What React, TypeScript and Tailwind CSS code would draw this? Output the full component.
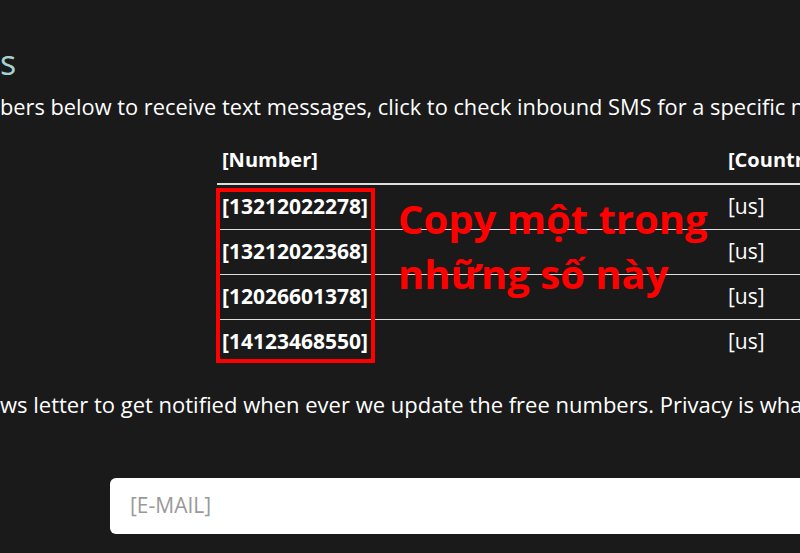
import React from "react";

const rows = ["13212022278", "13212022368", "12026601378", "14123468550"];

export default function App() {
  return (
    <div className="relative w-[800px] h-[553px] overflow-hidden bg-[#1a1a1a] text-white font-['Open_Sans',sans-serif]">
      <div className="mt-[40px] h-[44px] text-[34px] leading-[44px] text-[#a6d3d1] whitespace-nowrap">s</div>
      <p className="mt-[9px] text-[21.8px] leading-[28px] whitespace-nowrap overflow-hidden">
        bers below to receive text messages, click to check inbound SMS for a specific n
      </p>
      <div className="relative mt-[16px] ml-[217px] w-[583px]">
        <div className="flex h-[48px] items-center border-b-2 border-[#dddddd] text-[20px] font-bold">
          <div className="w-[511px] shrink-0 pl-[5px]">[Number]</div>
          <div className="whitespace-nowrap">[Countr</div>
        </div>
        {rows.map((n, i) => (
          <div
            key={n}
            className={
              i < 3
                ? "flex h-[45px] items-center border-b border-[#dddddd]"
                : "flex h-[44px] items-center"
            }
          >
            <div className="w-[511px] shrink-0 pl-[5px] text-[21px] font-bold">[{n}]</div>
            <div className="text-[21px]">[us]</div>
          </div>
        ))}
        <div className="absolute left-[-1px] top-[51px] w-[159px] h-[175px] border-[4px] border-[#ff0000]" />
        <div className="absolute left-[181px] top-[54px] text-[40px] leading-[55px] font-bold text-[#ff0000] whitespace-nowrap">
          Copy một trong
          <br />
          những số này
        </div>
      </div>
      <p className="mt-[26px] text-[22px] leading-[28px] whitespace-nowrap overflow-hidden">
        ws letter to get notified when ever we update the free numbers. Privacy is wha
      </p>
      <div className="mt-[60px] ml-[110px] w-[760px] h-[56px] rounded-[6px] bg-white flex items-center pl-[20px] text-[21px] text-[#999999]">
        [E-MAIL]
      </div>
    </div>
  );
}
